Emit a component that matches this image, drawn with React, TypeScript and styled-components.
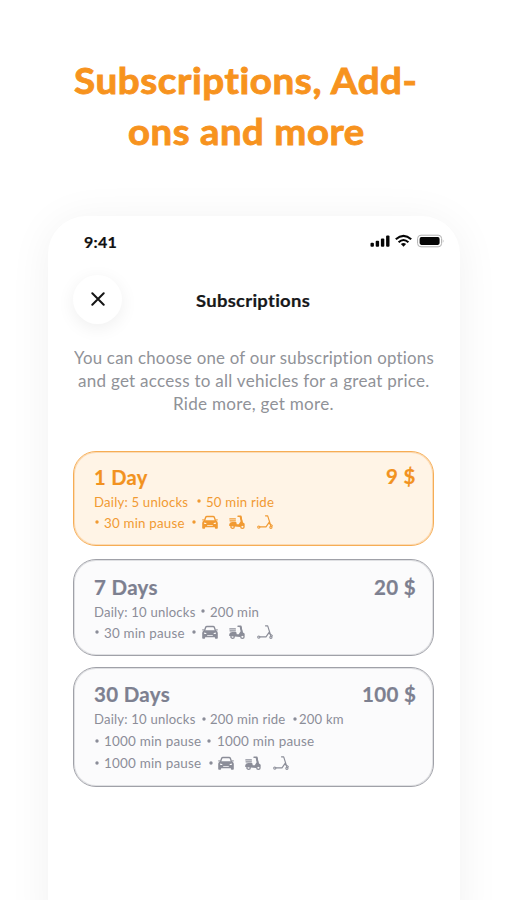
import React, { useLayoutEffect, useRef, useState } from 'react';
import styled, { createGlobalStyle } from 'styled-components';

const GlobalStyle = createGlobalStyle`
  * { box-sizing: border-box; }
  html, body { margin: 0; background: #fff; }
  body {
    font-family: Lato, 'Noto Sans', sans-serif;
    font-variant-ligatures: none;
    overflow: hidden;
  }
`;

const Page = styled.main`
  width: 507px;
  height: 900px;
  overflow: hidden;
  display: flex;
  flex-direction: column;
  background: #fff;
`;

const Headline = styled.h1`
  margin: 0;
  width: 492px;
  height: 216px;
  padding-top: 55px;
  display: flex;
  flex-direction: column;
  align-items: center;
  flex: none;
  color: #f7931e;
  font-size: 36px;
  font-weight: 700;
  line-height: 50.5px;
  -webkit-text-stroke: 0.9px #f7931e;
  stroke-linejoin: round;
`;

const Phone = styled.section`
  width: 412px;
  height: 720px;
  margin-left: 48px;
  flex: none;
  padding: 0 27px 0 25px;
  border-radius: 38px 38px 0 0;
  background: #fff;
  box-shadow: 0 4px 44px rgba(0, 0, 0, 0.06);
`;

const StatusBar = styled.div`
  height: 58.5px;
  padding: 16px 0 0 11px;
  display: flex;
  justify-content: space-between;
  color: #111;
  font-size: 16px;
  font-weight: 700;
  line-height: 20px;
  -webkit-text-stroke: 0.2px #111;
`;

const StatusIcons = styled.svg`
  width: 74px;
  height: 14px;
  margin: 2px -11px 0 0;
`;

const NavBar = styled.header`
  height: 49px;
  display: grid;
  grid-template-columns: 49px 1fr 49px;
  align-items: center;
`;

const CloseButton = styled.button`
  width: 49px;
  height: 49px;
  padding: 0;
  border: 0;
  border-radius: 50%;
  display: grid;
  place-items: center;
  background: #fff;
  box-shadow: 0 4px 18px rgba(0, 0, 0, 0.065);
`;

const NavTitle = styled.h2`
  margin: 3px 0 0;
  display: flex;
  justify-content: center;
  color: #17181a;
  font-size: 17px;
  font-weight: 700;
  line-height: 22px;
  -webkit-text-stroke: 0.2px #17181a;
`;

const Intro = styled.div`
  margin: 22.5px -1px 0 0;
  height: 105px;
  display: flex;
  flex-direction: column;
  align-items: center;
  color: #909298;
  font-size: 17px;
  line-height: 23.2px;
`;

const Plan = styled.article<{ $active?: boolean; $height: number; $gap: number; $top: number }>`
  width: 361px;
  height: ${p => p.$height}px;
  margin-bottom: ${p => p.$gap}px;
  padding: ${p => p.$top}px 17px 0 20px;
  border: 1px solid ${p => (p.$active ? '#f6ad55' : '#a0a1a8')};
  border-radius: 23px;
  background: ${p => (p.$active ? '#fff4e6' : '#fbfbfc')};
  box-shadow: inset 0 0 0 1px ${p => (p.$active ? 'rgba(246, 173, 85, 0.35)' : 'rgba(160, 161, 168, 0.3)')};
  color: ${p => (p.$active ? '#f19a32' : '#8b8d98')};
`;

const PlanHead = styled.div<{ $active?: boolean }>`
  height: 27px;
  display: flex;
  justify-content: space-between;
  color: ${p => (p.$active ? '#f29220' : '#7d8090')};
  font-size: 20.5px;
  font-weight: 700;
  line-height: 26px;
  -webkit-text-stroke: 0.2px currentColor;
`;

const Price = styled.div<{ $lift: number }>`
  margin-top: ${p => -p.$lift}px;
`;

const Line = styled.div<{ $height: number }>`
  height: ${p => p.$height}px;
  display: flex;
  align-items: center;
  font-size: 14px;
  line-height: 20px;
`;

const Dot = styled.svg<{ $before: number; $after: number }>`
  width: 4px;
  height: 4px;
  flex: none;
  margin: -1px ${p => p.$after - 0.3}px 0 ${p => p.$before - 0.3}px;
`;

const Vehicles = styled.div`
  display: flex;
  gap: 11.5px;
  margin-top: -1px;
`;

const Icon = styled.svg`
  display: block;
  width: 16px;
  height: 16px;
  color: inherit;
`;

const Measure = styled.span`
  display: block;
  flex: none;
  white-space: pre;
`;

const Glyphs = styled.span`
  display: inline-block;
  letter-spacing: 0.015em;
  transform-origin: 0 50%;
`;

/* Widens a single line of text so that it fills a given measure. */
function FitText({ text, width }: { text: string; width: number }) {
  const ref = useRef<HTMLSpanElement>(null);
  const [scale, setScale] = useState(1);
  useLayoutEffect(() => {
    if (ref.current) setScale(width / ref.current.offsetWidth);
  }, [text, width]);
  return (
    <Measure style={{ width }}>
      <Glyphs ref={ref} style={{ transform: `scaleX(${scale})` }}>
        {text}
      </Glyphs>
    </Measure>
  );
}

function Bullet({ before, after }: { before: number; after: number }) {
  return (
    <Dot $before={before} $after={after} viewBox="0 0 4 4">
      <circle cx="2" cy="2" r="1.7" fill="currentColor" />
    </Dot>
  );
}

function Car() {
  return (
    <Icon viewBox="0 0 16 16" fill="none" stroke="currentColor">
      <path d="M2.4 7 L3.7 3.3 Q4 2.5 5 2.5 H11 Q12 2.5 12.3 3.3 L13.6 7" strokeWidth="1.4" />
      <path
        d="M2 6.2 H14 Q15.8 7.2 15.8 9 V14 Q15.8 14.8 15 14.8 H13.6 Q12.9 14.8 12.9 14 V13.2 H3.1 V14 Q3.1 14.8 2.4 14.8 H1 Q.2 14.8 .2 14 V9 Q.2 7.2 2 6.2Z M2.2 8.5 V9.9 H4.6 L4 8.9Z M13.8 8.5 V9.9 H11.4 L12 8.9Z M5.2 10.9 V11.8 H10.8 V10.9Z"
        fill="currentColor"
        fillRule="evenodd"
        stroke="none"
      />
      <path d="M.2 5.9 H2 M14 5.9 H15.8" strokeWidth="1" />
    </Icon>
  );
}

function Moped() {
  return (
    <Icon viewBox="0 0 16 16" fill="none" stroke="currentColor" strokeLinecap="round">
      <path d="M.8 4.9 H6.4 M1 6.8 H6.4" strokeWidth="1.2" />
      <path d="M.2 12 V10.6 Q.4 8.2 3 8.1 H7.2 L7.8 10.3 H9.8 L11.6 7.2 L10.6 2.7 L12.5 2.2 L13.5 8.2 Q16 8.8 15.9 11.4 H12.8 L11 12.9Z" fill="currentColor" stroke="none" />
      <path d="M9 2.3 H11.7 L13.3 9" strokeWidth="1.4" />
      <circle cx="3.6" cy="12.7" r="1.7" strokeWidth="1.3" />
      <circle cx="13.4" cy="12.7" r="1.7" strokeWidth="1.3" />
    </Icon>
  );
}

function KickScooter() {
  return (
    <Icon viewBox="0 0 16 16" fill="none" stroke="currentColor" strokeLinecap="round" strokeLinejoin="round">
      <path d="M8.5 1.8 H10.7 L13.7 11.5 M12.3 8.2 L9 12.9 H3.2" strokeWidth="1.15" />
      <path d="M13 10.2 Q15 10.5 15.4 11.9" strokeWidth="1.1" />
      <circle cx="1.8" cy="13.1" r="1.1" strokeWidth="1.1" />
      <circle cx="13.9" cy="13.3" r="1.1" strokeWidth="1.1" />
    </Icon>
  );
}

function VehicleSet() {
  return (
    <Vehicles>
      <Car />
      <Moped />
      <KickScooter />
    </Vehicles>
  );
}

type Part = { text: string; width: number } | { before: number; after: number } | 'vehicles';

interface PlanData {
  name: string;
  nameWidth: number;
  price: string;
  priceWidth: number;
  active?: boolean;
  height: number;
  gap: number;
  top: number;
  lift: number;
  rowHeight: number;
  lines: Part[][];
}

const plans: PlanData[] = [
  {
    name: '1 Day', nameWidth: 54, price: '9 $', priceWidth: 30, active: true,
    height: 95, gap: 13, top: 12, lift: 1, rowHeight: 21,
    lines: [
      [{ text: 'Daily: 5 unlocks', width: 94 }, { before: 9.5, after: 5.5 }, { text: '50 min ride', width: 68 }],
      [{ before: 1, after: 5.5 }, { text: '30 min pause', width: 81 }, { before: 7, after: 6.5 }, 'vehicles'],
    ],
  },
  {
    name: '7 Days', nameWidth: 64, price: '20 $', priceWidth: 42,
    height: 97, gap: 11, top: 14, lift: 0, rowHeight: 21,
    lines: [
      [{ text: 'Daily: 10 unlocks', width: 102 }, { before: 5.5, after: 5 }, { text: '200 min', width: 49 }],
      [{ before: 1, after: 5.5 }, { text: '30 min pause', width: 81 }, { before: 7, after: 6.5 }, 'vehicles'],
    ],
  },
  {
    name: '30 Days', nameWidth: 76, price: '100 $', priceWidth: 54,
    height: 120, gap: 0, top: 13, lift: 0, rowHeight: 22,
    lines: [
      [{ text: 'Daily: 10 unlocks', width: 102 }, { before: 6.5, after: 4 }, { text: '200 min ride', width: 75 }, { before: 8.5, after: 2 }, { text: '200 km', width: 45 }],
      [{ before: 1, after: 5.5 }, { text: '1000 min pause', width: 97 }, { before: 6.5, after: 6 }, { text: '1000 min pause', width: 97 }],
      [{ before: 1, after: 5.5 }, { text: '1000 min pause', width: 97 }, { before: 8, after: 5.5 }, 'vehicles'],
    ],
  },
];

function PlanCard({ plan }: { plan: PlanData }) {
  return (
    <Plan $active={plan.active} $height={plan.height} $gap={plan.gap} $top={plan.top}>
      <PlanHead $active={plan.active}>
        <FitText text={plan.name} width={plan.nameWidth} />
        <Price $lift={plan.lift}>
          <FitText text={plan.price} width={plan.priceWidth} />
        </Price>
      </PlanHead>
      {plan.lines.map((line, i) => (
        <Line key={i} $height={plan.rowHeight}>
          {line.map((part, j) => {
            if (part === 'vehicles') return <VehicleSet key={j} />;
            if ('text' in part) return <FitText key={j} text={part.text} width={part.width} />;
            return <Bullet key={j} before={part.before} after={part.after} />;
          })}
        </Line>
      ))}
    </Plan>
  );
}

export default function App() {
  return (
    <Page>
      <GlobalStyle />
      <Headline>
        <FitText text="Subscriptions, Add-" width={344} />
        <FitText text="ons and more" width={237} />
      </Headline>
      <Phone>
        <StatusBar>
          <FitText text="9:41" width={33} />
          <StatusIcons viewBox="0 0 74 14" fill="none">
            <g fill="#050505">
              <rect x="0.5" y="8.8" width="3.4" height="4" rx="1" />
              <rect x="5.7" y="6.8" width="3.4" height="6" rx="1" />
              <rect x="10.9" y="4.5" width="3.4" height="8.3" rx="1" />
              <rect x="16.1" y="1.6" width="3.4" height="11.2" rx="1" />
            </g>
            <g stroke="#050505" strokeWidth="2.1">
              <path d="M25.8 5.2 Q33.5 -1.6 41.2 5.2" />
              <path d="M28.6 8.2 Q33.5 3.8 38.4 8.2" />
            </g>
            <path d="M30.9 10 Q33.5 7.8 36.1 10 L33.5 12.7Z" fill="#050505" />
            <rect x="47.6" y="1.2" width="24" height="11.6" rx="3.4" stroke="#b0b0b0" />
            <rect x="49.6" y="3.1" width="20" height="7.8" rx="1.8" fill="#050505" />
            <path d="M72.8 5.2 Q74.2 7 72.8 8.8Z" fill="#b0b0b0" />
          </StatusIcons>
        </StatusBar>
        <NavBar>
          <CloseButton aria-label="Close">
            <svg width="14" height="14" viewBox="0 0 14 14">
              <path d="M1.3 1.3 L12.7 12.7 M12.7 1.3 L1.3 12.7" stroke="#151515" strokeWidth="2" strokeLinecap="round" />
            </svg>
          </CloseButton>
          <NavTitle>
            <FitText text="Subscriptions" width={114} />
          </NavTitle>
        </NavBar>
        <Intro>
          <FitText text="You can choose one of our subscription options" width={360} />
          <FitText text="and get access to all vehicles for a great price." width={352} />
          <FitText text="Ride more, get more." width={161} />
        </Intro>
        {plans.map(plan => (
          <PlanCard key={plan.name} plan={plan} />
        ))}
      </Phone>
    </Page>
  );
}
